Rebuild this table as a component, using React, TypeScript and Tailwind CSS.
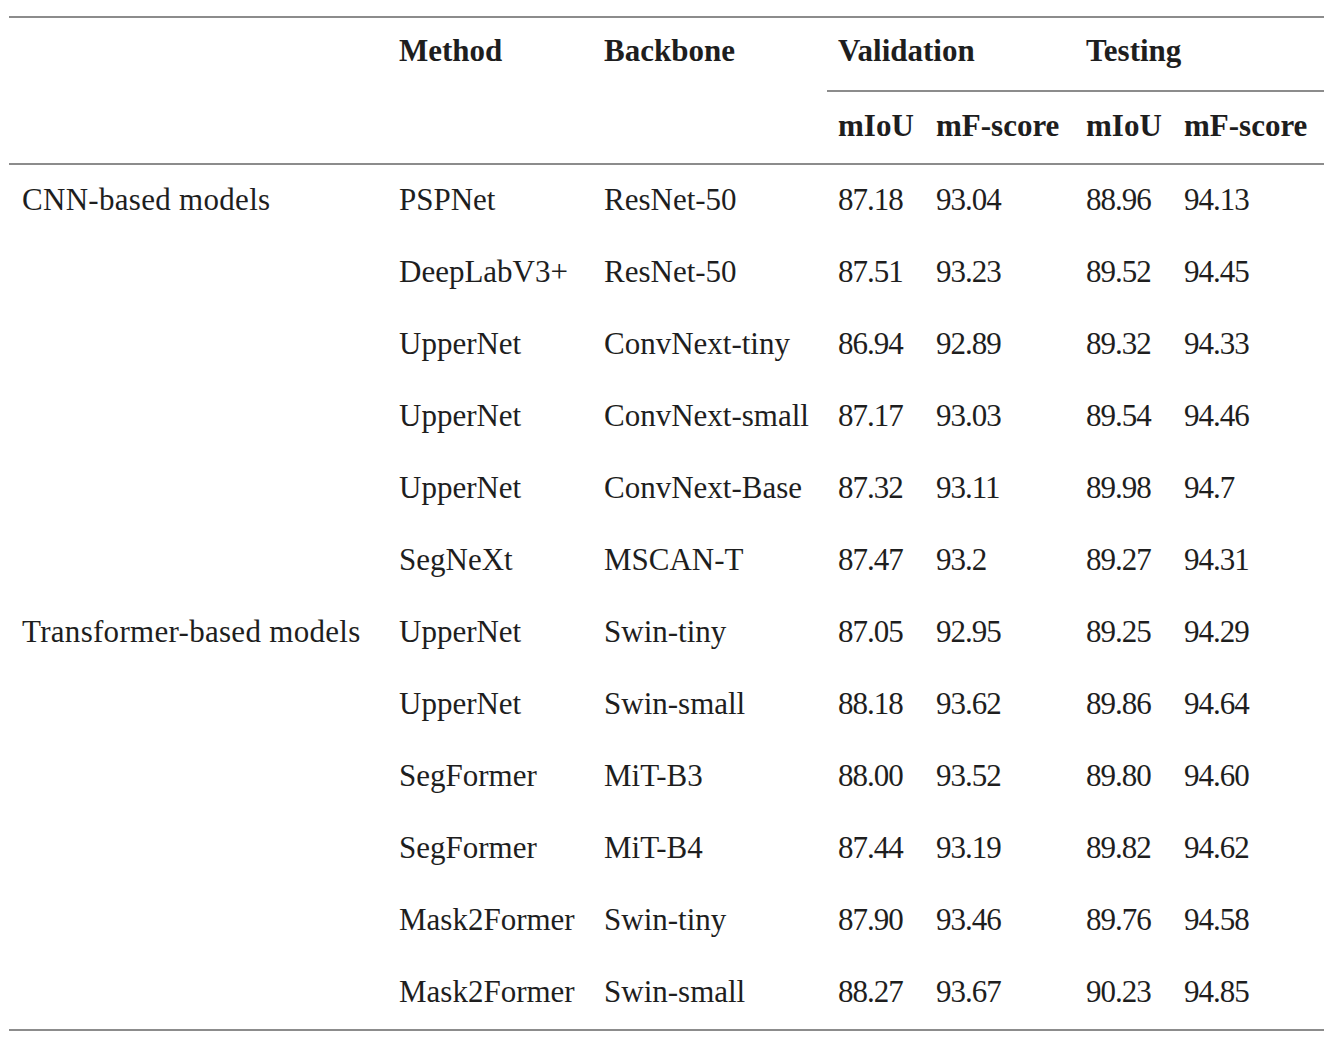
type Row = {
  group?: string;
  method: string;
  backbone: string;
  valIou: string;
  valF: string;
  testIou: string;
  testF: string;
};

const rows: Row[] = [
  { group: "CNN-based models", method: "PSPNet", backbone: "ResNet-50", valIou: "87.18", valF: "93.04", testIou: "88.96", testF: "94.13" },
  { method: "DeepLabV3+", backbone: "ResNet-50", valIou: "87.51", valF: "93.23", testIou: "89.52", testF: "94.45" },
  { method: "UpperNet", backbone: "ConvNext-tiny", valIou: "86.94", valF: "92.89", testIou: "89.32", testF: "94.33" },
  { method: "UpperNet", backbone: "ConvNext-small", valIou: "87.17", valF: "93.03", testIou: "89.54", testF: "94.46" },
  { method: "UpperNet", backbone: "ConvNext-Base", valIou: "87.32", valF: "93.11", testIou: "89.98", testF: "94.7" },
  { method: "SegNeXt", backbone: "MSCAN-T", valIou: "87.47", valF: "93.2", testIou: "89.27", testF: "94.31" },
  { group: "Transformer-based models", method: "UpperNet", backbone: "Swin-tiny", valIou: "87.05", valF: "92.95", testIou: "89.25", testF: "94.29" },
  { method: "UpperNet", backbone: "Swin-small", valIou: "88.18", valF: "93.62", testIou: "89.86", testF: "94.64" },
  { method: "SegFormer", backbone: "MiT-B3", valIou: "88.00", valF: "93.52", testIou: "89.80", testF: "94.60" },
  { method: "SegFormer", backbone: "MiT-B4", valIou: "87.44", valF: "93.19", testIou: "89.82", testF: "94.62" },
  { method: "Mask2Former", backbone: "Swin-tiny", valIou: "87.90", valF: "93.46", testIou: "89.76", testF: "94.58" },
  { method: "Mask2Former", backbone: "Swin-small", valIou: "88.27", valF: "93.67", testIou: "90.23", testF: "94.85" },
];

// column widths taken from the rule positions
const cols = "grid grid-cols-[379px_205px_234px_98px_150px_98px_151px]";

function App() {
  return (
    <div className="min-h-screen bg-white pt-[16px] pl-[9px] text-[31px] leading-[34px] text-[#1e1e1e] font-['Liberation_Serif',serif]">
      <div className="w-[1315px]">
        <div className="h-[2px] bg-[#8c8c8c]" />

        {/* header */}
        <div className={`${cols} grid-rows-[74px_71px] font-bold`}>
          <div className="row-span-2" />
          <div className="row-span-2 pl-[11px] pt-[16px]">Method</div>
          <div className="row-span-2 pl-[11px] pt-[16px]">Backbone</div>
          <div className="col-span-2 border-b-2 border-[#8c8c8c] pl-[11px] pt-[16px]">
            Validation
          </div>
          <div className="col-span-2 border-b-2 border-[#8c8c8c] pl-[11px] pt-[16px]">
            Testing
          </div>
          <div className="pl-[11px] pt-[17px]">mIoU</div>
          <div className="pl-[11px] pt-[17px]">mF-score</div>
          <div className="pl-[11px] pt-[17px]">mIoU</div>
          <div className="pl-[11px] pt-[17px]">mF-score</div>
        </div>

        <div className="h-[2px] bg-[#8c8c8c]" />

        {/* body */}
        {rows.map((row, i) => (
          <div key={i} className={`${cols} h-[72px]`}>
            <div className="pl-[13px] pt-[18px] whitespace-nowrap tracking-[0.3px]">{row.group}</div>
            <div className="pl-[11px] pt-[18px] whitespace-nowrap">{row.method}</div>
            <div className="pl-[11px] pt-[18px] whitespace-nowrap">{row.backbone}</div>
            <div className="pl-[11px] pt-[18px] tracking-[-1px]">{row.valIou}</div>
            <div className="pl-[11px] pt-[18px] tracking-[-1px]">{row.valF}</div>
            <div className="pl-[11px] pt-[18px] tracking-[-1px]">{row.testIou}</div>
            <div className="pl-[11px] pt-[18px] tracking-[-1px]">{row.testF}</div>
          </div>
        ))}

        <div className="h-[2px] bg-[#8c8c8c]" />
      </div>
    </div>
  );
}

export default App;
